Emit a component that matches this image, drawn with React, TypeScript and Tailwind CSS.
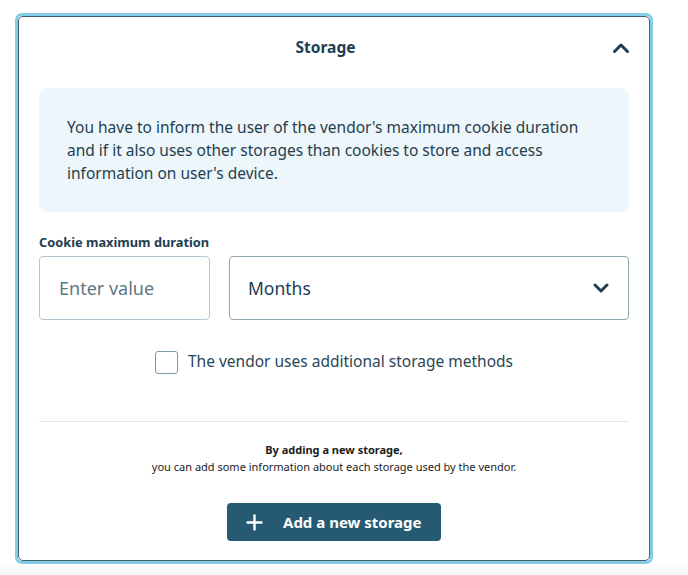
import React from 'react';

const font = { fontFamily: '"Noto Sans", "Open Sans", sans-serif' };

const ChevronUp = () => (
  <svg width="18" height="12" viewBox="0 0 18 12" fill="none">
    <path d="M2.5 9.5L9 3L15.5 9.5" stroke="#1d3d52" strokeWidth="3" strokeLinecap="round" strokeLinejoin="round" />
  </svg>
);

const ChevronDown = () => (
  <svg width="16" height="12" viewBox="0 0 16 12" fill="none">
    <path d="M2 3L8 9L14 3" stroke="#1d3d52" strokeWidth="3" strokeLinecap="round" strokeLinejoin="round" />
  </svg>
);

const App = () => {
  return (
    <div className="flex h-[575px] w-[688px] flex-col bg-white" style={font}>
      <div className="pt-[13px] pl-[15px]">
        <div className="h-[551px] w-[638px] rounded-[7px] border-[3px] border-[#84cbe8]">
          <div className="h-full rounded-[5px] border border-[#40606f] bg-white px-[20px]">
            {/* header */}
            <div className="flex h-[62px] items-center">
              <div className="flex-1 text-center text-[15.5px] font-bold text-[#1d3d52]">Storage</div>
              <div className="-mr-[1px] w-[18px]">
                <ChevronUp />
              </div>
            </div>

            {/* info box */}
            <div className="mt-[9px] h-[124px] rounded-[8px] bg-[#edf6fa] px-[28px] pt-[28px] text-[15.5px] leading-[23px] text-[#253f4f]">
              You have to inform the user of the vendor's maximum cookie duration and if it also uses other storages than cookies to store and access information on user's device.
            </div>

            {/* cookie duration */}
            <div className="mt-[21px] text-[12.8px] font-bold leading-[18px] text-[#1d3d52]">Cookie maximum duration</div>
            <div className="mt-[5px] flex gap-[19px]">
              <div className="flex h-[64px] w-[171px] items-center rounded-[4px] border border-[#b4c8d2] px-[19px] text-[18px] text-[#5f7783]">
                Enter value
              </div>
              <div className="flex h-[64px] flex-1 items-center justify-between rounded-[4px] border-[1.5px] border-[#8fa6b2] pl-[18px] pr-[19px] text-[17.5px] text-[#1d3d52]">
                <span>Months</span>
                <ChevronDown />
              </div>
            </div>

            {/* checkbox */}
            <div className="mt-[30px] flex h-[24px] items-center justify-center gap-[10px]">
              <div className="h-[23px] w-[23px] rounded-[3px] border-[1.5px] border-[#7f98a5]" />
              <span className="text-[15.5px] text-[#2a4656]">The vendor uses additional storage methods</span>
            </div>

            <div className="mt-[47px] h-px bg-[#e6e6e6]" />

            {/* add storage */}
            <div className="mt-[19px] text-center text-[11px] leading-[17px] text-[#1b1b1b]">
              <div className="font-bold">By adding a new storage,</div>
              <div>you can add some information about each storage used by the vendor.</div>
            </div>
            <div className="mt-[28px] flex justify-center">
              <button className="flex h-[38px] w-[214px] items-center gap-[20px] rounded-[4px] bg-[#265a73] pl-[19px] text-[15px] font-bold text-white">
                <svg width="17" height="17" viewBox="0 0 17 17" fill="none">
                  <path d="M8.5 1.5V15.5M1.5 8.5H15.5" stroke="white" strokeWidth="2.4" strokeLinecap="round" />
                </svg>
                Add a new storage
              </button>
            </div>
          </div>
        </div>
      </div>
      <div className="flex-1 bg-gradient-to-b from-white to-[#f4f4f4]" />
    </div>
  );
};

export default App;
